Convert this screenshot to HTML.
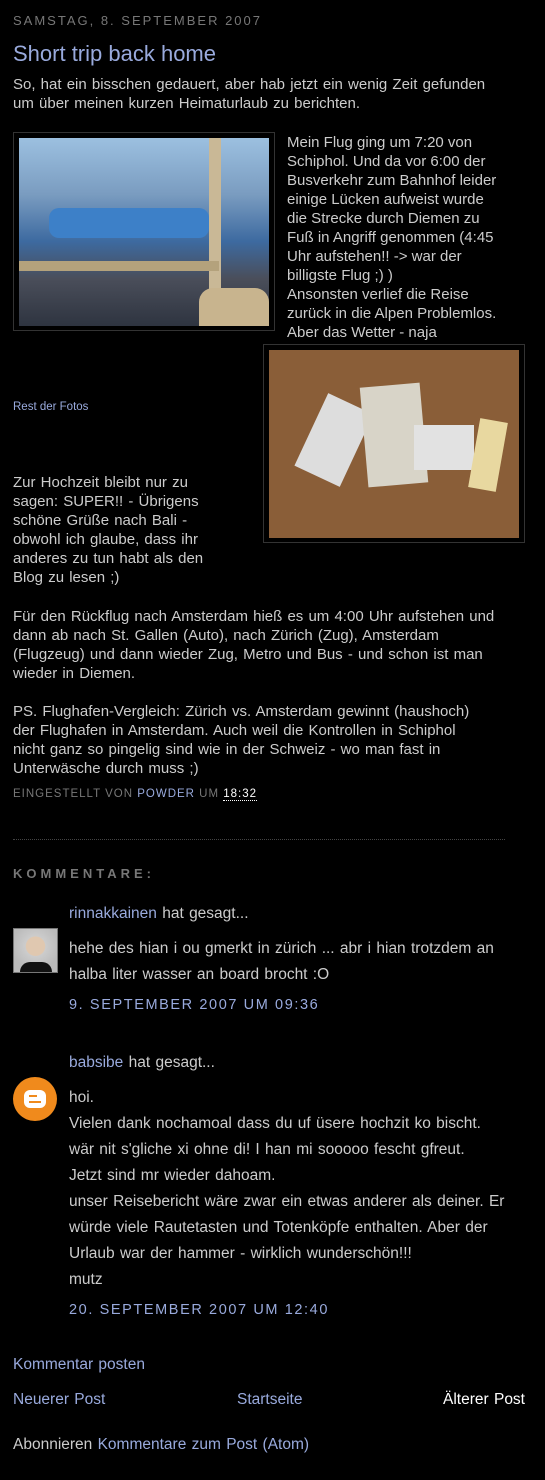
<!DOCTYPE html>
<html><head><meta charset="utf-8"><style>
body{margin:0;background:#000;width:545px;height:1480px;position:relative;overflow:hidden;font-family:"Liberation Sans",sans-serif;color:#ccc;}
.a{position:absolute;white-space:nowrap;}
.t{font-size:15px;line-height:19px;color:#ccc;word-spacing:1px;}
.c{font-size:15.5px;color:#ccc;word-spacing:1px;}
.l{color:#99aadd;}
</style></head><body>
<div class="a" style="left:13px;top:13px;font-size:13px;letter-spacing:2px;color:#777">SAMSTAG, 8. SEPTEMBER 2007</div>
<div class="a l" style="left:13px;top:41px;font-size:22px">Short trip back home</div>
<div class="a t" style="left:13px;top:75px">So, hat ein bisschen gedauert, aber hab jetzt ein wenig Zeit gefunden<br>um über meinen kurzen Heimaturlaub zu berichten.</div>

<div class="a" style="left:13px;top:132px;width:260px;height:197px;border:1px solid #333">
<div style="position:absolute;left:5px;top:5px;width:250px;height:188px;background:linear-gradient(180deg,#9cc0e0 0%,#7a9cc0 30%,#3d6aa0 55%,#4a4e5a 75%,#2e3440 100%)">
<div style="position:absolute;left:190px;top:0;width:12px;height:188px;background:#c9b896"></div>
<div style="position:absolute;left:0;top:123px;width:200px;height:10px;background:#b4a27c"></div>
<div style="position:absolute;left:30px;top:70px;width:160px;height:30px;background:#3d80c8;border-radius:10px"></div>
<div style="position:absolute;left:180px;top:150px;width:70px;height:38px;background:#c8b48e;border-radius:14px 14px 0 0"></div>
</div></div>

<div class="a t" style="left:287px;top:133px;word-spacing:0">Mein Flug ging um 7:20 von<br>Schiphol. Und da vor 6:00 der<br>Busverkehr zum Bahnhof leider<br>einige Lücken aufweist wurde<br>die Strecke durch Diemen zu<br>Fuß in Angriff genommen (4:45<br>Uhr aufstehen!! -&gt; war der<br>billigste Flug ;) )<br>Ansonsten verlief die Reise<br>zurück in die Alpen Problemlos.<br>Aber das Wetter - naja</div>

<div class="a" style="left:263px;top:344px;width:260px;height:197px;border:1px solid #333">
<div style="position:absolute;left:5px;top:5px;width:250px;height:188px;background:#8a5e38">
<div style="position:absolute;left:40px;top:50px;width:50px;height:80px;background:#ddd;transform:rotate(25deg)"></div>
<div style="position:absolute;left:95px;top:35px;width:60px;height:100px;background:#d8d4c8;transform:rotate(-5deg)"></div>
<div style="position:absolute;left:145px;top:75px;width:60px;height:45px;background:#e2e2e2"></div>
<div style="position:absolute;left:205px;top:70px;width:28px;height:70px;background:#e8d8a0;transform:rotate(10deg)"></div>
</div></div>

<div class="a l" style="left:13px;top:401px;font-size:11.5px">Rest der Fotos</div>
<div class="a t" style="left:13px;top:473px">Zur Hochzeit bleibt nur zu<br>sagen: SUPER!! - Übrigens<br>schöne Grüße nach Bali -<br>obwohl ich glaube, dass ihr<br>anderes zu tun habt als den<br>Blog zu lesen ;)</div>
<div class="a t" style="left:13px;top:607px">Für den Rückflug nach Amsterdam hieß es um 4:00 Uhr aufstehen und<br>dann ab nach St. Gallen (Auto), nach Zürich (Zug), Amsterdam<br>(Flugzeug) und dann wieder Zug, Metro und Bus - und schon ist man<br>wieder in Diemen.</div>
<div class="a t" style="left:13px;top:702px">PS. Flughafen-Vergleich: Zürich vs. Amsterdam gewinnt (haushoch)<br>der Flughafen in Amsterdam. Auch weil die Kontrollen in Schiphol<br>nicht ganz so pingelig sind wie in der Schweiz - wo man fast in<br>Unterwäsche durch muss ;)</div>
<div class="a" style="left:13px;top:788px;font-size:11.5px;letter-spacing:1px;color:#777">EINGESTELLT VON <span class="l">POWDER</span> UM <span style="color:#fff;border-bottom:1px dotted #fff">18:32</span></div>
<div class="a" style="left:13px;top:839px;width:492px;border-top:1px dotted #444"></div>
<div class="a" style="left:13px;top:866px;font-size:13px;font-weight:bold;letter-spacing:4px;color:#777">KOMMENTARE:</div>

<div class="a c" style="left:69px;top:905px"><span class="l">rinnakkainen</span> hat gesagt...</div>
<div class="a" style="left:13px;top:928px;width:43px;height:43px;border:1px solid #777;background:radial-gradient(circle at 50% 40%,#e0c8b0 0 28%,#ccc 30%,#bbb 70%);"><div style="position:absolute;bottom:0;left:6px;width:32px;height:10px;background:#111;border-radius:10px 10px 0 0"></div></div>
<div class="a c" style="left:69px;top:936px;line-height:26px">hehe des hian i ou gmerkt in zürich ... abr i hian trotzdem an<br>halba liter wasser an board brocht :O</div>
<div class="a l" style="left:69px;top:997px;font-size:14.5px;letter-spacing:1.6px">9. SEPTEMBER 2007 UM 09:36</div>

<div class="a c" style="left:69px;top:1054px"><span class="l">babsibe</span> hat gesagt...</div>
<div class="a" style="left:13px;top:1077px;width:44px;height:44px;border-radius:50%;background:#f08a1c"><div style="position:absolute;left:11px;top:13px;width:22px;height:18px;background:#fff;border-radius:6px"></div><div style="position:absolute;left:16px;top:18px;width:8px;height:2px;background:#f08a1c"></div><div style="position:absolute;left:16px;top:24px;width:12px;height:2px;background:#f08a1c"></div></div>
<div class="a c" style="left:69px;top:1085px;line-height:26px">hoi.<br>Vielen dank nochamoal dass du uf üsere hochzit ko bischt.<br>wär nit s'gliche xi ohne di! I han mi sooooo fescht gfreut.<br>Jetzt sind mr wieder dahoam.<br>unser Reisebericht wäre zwar ein etwas anderer als deiner. Er<br>würde viele Rautetasten und Totenköpfe enthalten. Aber der<br>Urlaub war der hammer - wirklich wunderschön!!!<br>mutz</div>
<div class="a l" style="left:69px;top:1302px;font-size:14.5px;letter-spacing:1.6px">20. SEPTEMBER 2007 UM 12:40</div>

<div class="a c l" style="left:13px;top:1356px;color:#99aadd">Kommentar posten</div>
<div class="a c l" style="left:13px;top:1391px;color:#99aadd">Neuerer Post</div>
<div class="a c l" style="left:237px;top:1391px;color:#99aadd">Startseite</div>
<div class="a c" style="right:20px;top:1391px;color:#fff">Älterer Post</div>
<div class="a c" style="left:13px;top:1436px">Abonnieren <span class="l">Kommentare zum Post (Atom)</span></div>
</body></html>
